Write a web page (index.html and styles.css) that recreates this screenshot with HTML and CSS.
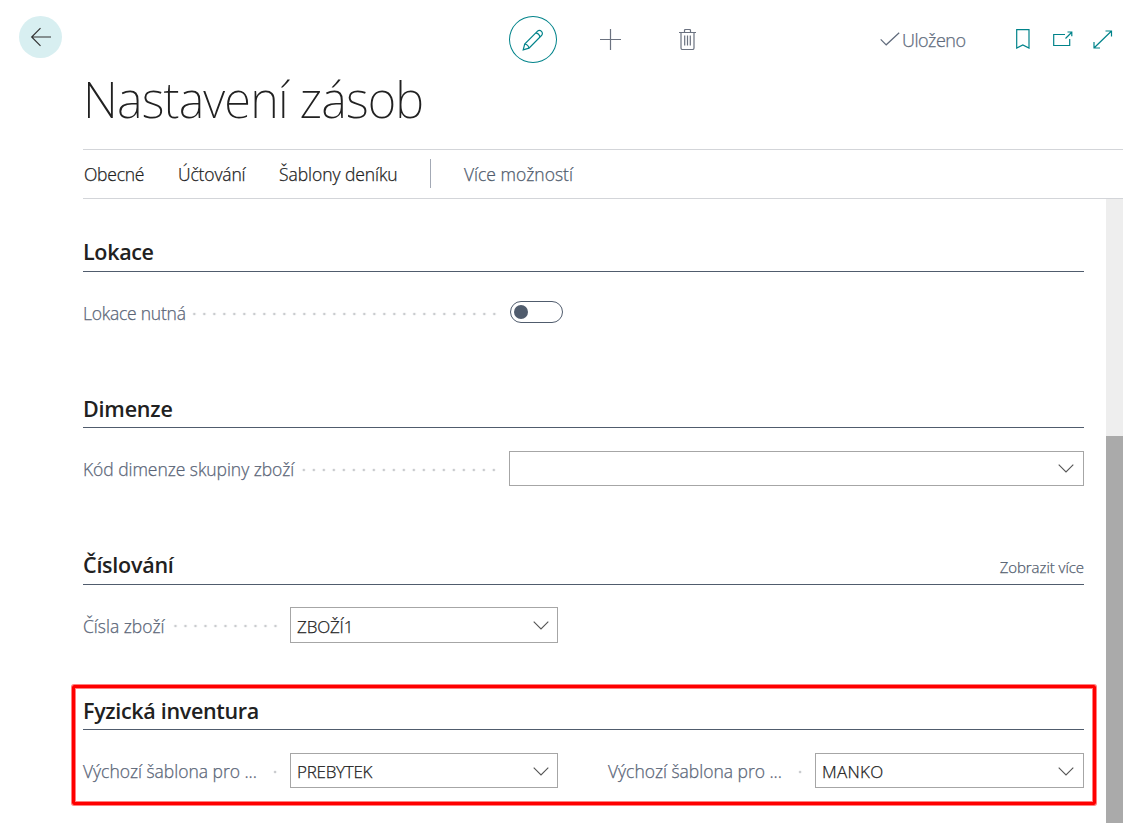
FILE: index.html
```html
<!DOCTYPE html>
<html lang="cs">
<head>
<meta charset="utf-8">
<title>Nastavení zásob</title>
<link rel="stylesheet" href="styles.css">
</head>
<body>
<div class="page">
  <header class="topbar">
    <button class="back" aria-label="Zpět"><svg width="22" height="20" viewBox="0 0 22 20"><path d="M21 10H1.500M10.500 1.200L1.700 10l8.800 8.800"/></svg></button>
    <div class="tools">
      <button class="edit" aria-label="Upravit"><svg width="22" height="22" viewBox="0 0 22 22"><path d="M1.200 20.800l1.500-5.800L15.300 2.300a2.950 2.950 0 0 1 4.200 0 2.950 2.950 0 0 1 0 4.200L7 19.200zM2.700 15q3.600.6 4.300 4.200M13.700 3.900q3.600.6 4.200 4.200"/></svg></button>
      <button class="tool plus" aria-label="Nový"><svg width="21" height="21" viewBox="0 0 21 21"><path d="M10.500 0v21M0 10.500h21"/></svg></button>
      <button class="tool trash" aria-label="Odstranit"><svg width="17" height="21" viewBox="0 0 17 21"><path d="M0 3.500h17M5.500 3V1.500q0-1 1-1h4q1 0 1 1V3M2 3.500v15.500q0 1.500 1.500 1.500h10q1.500 0 1.500-1.500V3.500M5.700 6.500v10M8.500 6.500v10M11.300 6.500v10"/></svg></button>
    </div>
    <div class="saved"><svg width="20" height="14" viewBox="0 0 20 14"><path d="M.7 7.300l5.500 5.500L19.200.7"/></svg><span class="t-saved">Uloženo</span></div>
    <div class="window-tools">
      <svg class="bookmark" width="14" height="20" viewBox="0 0 14 20"><path d="M.7.600h12.300v18.500L6.800 16 .7 19.100z"/></svg>
      <svg class="popout" width="20" height="16" viewBox="0 0 20 16"><path d="M12 3.500H.7v11h16V8M12.500 7.500l6-6M14.500 1h4.300v4.300"/></svg>
      <svg class="expand" width="20" height="19" viewBox="0 0 20 19"><path d="M1.500 17.500l16.500-16M12.500 1h6v5.500M1 12v6h6"/></svg>
    </div>
  </header>
  <h1 class="title"><span class="t-title">Nastavení zásob</span></h1>
  <nav class="menu">
    <span class="item m1">Obecné</span>
    <span class="item m2">Účtování</span>
    <span class="item m3">Šablony deníku</span>
    <span class="divider"></span>
    <span class="item more">Více možností</span>
  </nav>
  <div class="body">
    <main class="content">
      <section class="group lokace">
        <div class="head"><h2 class="h-lok">Lokace</h2></div>
        <div class="row wide">
          <div class="label"><span class="l-lok">Lokace nutná</span><i class="dots"></i></div>
          <div class="toggle"></div>
        </div>
      </section>
      <section class="group dimenze">
        <div class="head"><h2 class="h-dim">Dimenze</h2></div>
        <div class="row wide">
          <div class="label"><span class="l-dim">Kód dimenze skupiny zboží</span><i class="dots"></i></div>
          <div class="field"><span></span><svg class="chev" width="16" height="9" viewBox="0 0 16 9"><path d="M.7.700L8 8 15.300.700"/></svg></div>
        </div>
      </section>
      <section class="group cislovani">
        <div class="head"><h2 class="h-cis">Číslování</h2><span class="show-more">Zobrazit více</span></div>
        <div class="row half">
          <div class="label"><span class="l-cis">Čísla zboží</span><i class="dots"></i></div>
          <div class="field"><span class="v-zbo">ZBOŽÍ1</span><svg class="chev" width="16" height="9" viewBox="0 0 16 9"><path d="M.7.700L8 8 15.300.700"/></svg></div>
        </div>
      </section>
      <section class="group inventura">
        <div class="head"><h2 class="h-inv">Fyzická inventura</h2></div>
        <div class="row half">
          <div class="label"><span class="l-inv">Výchozí šablona pro ...</span><i class="dots"></i></div>
          <div class="field"><span class="v-pre">PREBYTEK</span><svg class="chev" width="16" height="9" viewBox="0 0 16 9"><path d="M.7.700L8 8 15.300.700"/></svg></div>
          <div class="label second"><span class="l-inv">Výchozí šablona pro ...</span><i class="dots"></i></div>
          <div class="field last"><span class="v-man">MANKO</span><svg class="chev" width="16" height="9" viewBox="0 0 16 9"><path d="M.7.700L8 8 15.300.700"/></svg></div>
        </div>
        <div class="highlight"></div>
      </section>
    </main>
    <div class="scrollbar"><div class="thumb"></div></div>
  </div>
</div>
</body>
</html>
```
FILE: styles.css
```css
* { box-sizing: border-box; }
body { margin: 0; background: #fff; font-family: "Open Sans", "Noto Sans", sans-serif; font-weight: 300; color: #212121; }
svg { display: block; fill: none; stroke: currentColor; stroke-width: 1.200; flex: none; }
button { padding: 0; border: 0; background: none; color: inherit; display: flex; align-items: center; justify-content: center; flex: none; }
.page { width: 1138px; height: 823px; overflow: hidden; display: flex; flex-direction: column; }

.topbar { height: 75px; flex: none; display: flex; align-items: flex-start; padding: 16px 25px 0 19px; }
.back { width: 43px; height: 42px; border-radius: 50%; background: #d8eff1; color: #333; }
.tools { display: flex; align-items: center; margin-left: 447px; }
.edit { width: 48px; height: 47px; border: 1px solid #00838a; border-radius: 50%; color: #00838a; }
.tool { color: #6b7280; padding-bottom: 1px; }
.plus { margin-left: 43px; }
.trash { margin-left: 58px; }
.saved { display: flex; align-items: center; height: 46px; margin-left: 184px; color: #606b7c; font-size: 18px; width: 136px; gap: 2px; }
.t-saved { padding-top: 2px; letter-spacing: -.5px; }
.saved, .menu, .label, .field, .show-more { -webkit-text-stroke: .25px currentColor; }
.window-tools { display: flex; align-items: center; height: 46px; color: #00838a; }
.popout { margin-left: 23px; }
.expand { margin-left: 20px; }

.title { height: 74px; flex: none; margin: 0; padding-left: 83px; font-size: 49px; line-height: 48px; font-weight: 300; letter-spacing: -1.200px; white-space: nowrap; }
.title { font-family: "Noto Sans", "Open Sans", sans-serif; font-weight: 200; letter-spacing: -.850px; }
.menu { height: 50px; flex: none; margin: 0 15px 0 83px; border-top: 1px solid #d3d5d9; border-bottom: 1px solid #d3d5d9; display: flex; align-items: center; font-size: 17.500px; letter-spacing: -.15px; white-space: nowrap; }
.item { flex: none; }
.m1 { width: 95px; padding-left: 1px; letter-spacing: -.25px; }
.m2 { width: 101px; }
.m3 { width: 151px; letter-spacing: -.06px; }
.divider { width: 1px; height: 29px; background: #a3a9b5; margin-right: 33px; margin-bottom: 1px; }
.more { color: #505c6d; letter-spacing: 0; }

.body { flex: 1; display: flex; min-height: 0; }
.content { width: 1001px; margin-left: 83px; }
.scrollbar { width: 17px; margin-left: 22px; background: #eee; padding-top: 237px; display: flex; }
.thumb { width: 17px; background: #aaa; }

.group { position: relative; }
.lokace { height: 156px; }
.dimenze { height: 157px; }
.cislovani { height: 145px; }
.head { height: 73px; border-bottom: 1px solid #505c6d; display: flex; align-items: flex-end; justify-content: space-between; }
h2 { margin: 0; font-size: 21.500px; line-height: 30px; font-weight: 600; padding-bottom: 4px; white-space: nowrap; }
.h-lok { letter-spacing: -.33px; }
.h-dim { letter-spacing: -.2px; padding-bottom: 3px; }
.h-cis { letter-spacing: -.25px; }
.h-inv { letter-spacing: -.32px; padding-bottom: 3px; }
.show-more { font-size: 15px; line-height: 20px; padding-bottom: 7px; color: #505c6d; letter-spacing: -.05px; }
.row { display: grid; margin-top: 23px; height: 35px; align-items: center; }
.wide { grid-template-columns: 426px 575px; }
.half { grid-template-columns: 207px 268px 257px 269px; }
.cislovani .row { margin-top: 22px; }
.cislovani .row, .cislovani .field { height: 36px; }
.label { display: flex; align-items: center; font-size: 17.500px; color: #5a6577; white-space: nowrap; padding-right: 10px; }
.label.second { padding-left: 50px; }
.cislovani .label { padding-top: 2px; }
.l-lok { letter-spacing: -.24px; }
.l-dim { letter-spacing: -.05px; }
.l-cis { letter-spacing: 0; }
.l-inv { letter-spacing: -.02px; }
.dots { flex: 1; margin-left: 5px; height: 4px; margin-top: 2px; background: radial-gradient(circle at 5px 2px, #c9cbce 1px, transparent 1.700px) right top / 10px 4px repeat-x; }
.cislovani .dots { margin-top: 0; }
.inventura .dots { margin-left: 12px; }
.toggle { width: 53px; height: 22px; margin: 0 0 2px 1px; border: 1px solid #505c6d; border-radius: 11px; padding: 3px; display: flex; }
.toggle::before { content: ""; width: 14px; height: 14px; border-radius: 50%; background: #505c6d; }
.field { height: 35px; border: 1px solid #a6a6a6; display: flex; align-items: center; justify-content: space-between; padding: 0 8px 0 6px; font-size: 17px; }
.wide .field, .field.last { padding-right: 9px; }
.field span { padding-top: 2px; }
.v-zbo { letter-spacing: -.15px; }
.v-pre { letter-spacing: -.25px; }
.v-man { letter-spacing: .3px; }
.chev { color: #555; stroke-width: 1.100; }
.cislovani .chev { margin-top: 1px; }
.inventura .chev { margin-top: 2px; }
.highlight { position: absolute; left: -11px; top: 28px; width: 1024px; height: 120px; border: 3px solid #f00; border-radius: 2px; box-shadow: 0 0 0 1px rgba(255, 0, 0, .5), inset 0 0 0 1px rgba(255, 0, 0, .5); }
```
